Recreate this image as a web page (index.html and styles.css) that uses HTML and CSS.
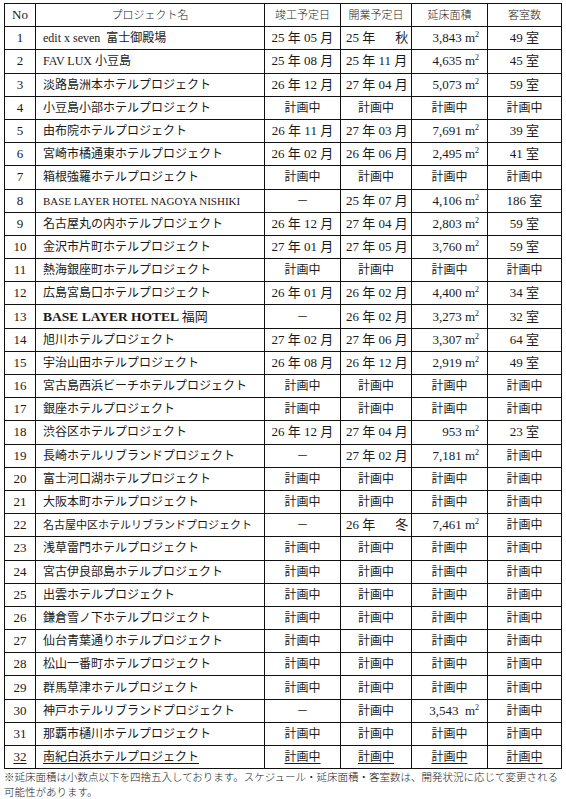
FILE: index.html
```html
<!DOCTYPE html>
<html lang="ja">
<head>
<meta charset="utf-8">
<title>プロジェクト一覧</title>
<link rel="stylesheet" href="styles.css">
</head>
<body>
<div class="page">
<table class="projects">
<colgroup>
<col class="c-no"><col class="c-name"><col class="c-date"><col class="c-open"><col class="c-area"><col class="c-room">
</colgroup>
<thead>
<tr><th>No</th><th class="h-ja">プロジェクト名</th><th class="h-ja">竣工予定日</th><th class="h-ja">開業予定日</th><th class="h-ja">延床面積</th><th class="h-ja">客室数</th></tr>
</thead>
<tbody>
<tr><td class="no">1</td><td class="name">edit x seven&nbsp; 富士御殿場</td><td class="date">25 年 05 月</td><td class="open">25 年<span class="sea">秋</span></td><td class="area">3,843 m<sup>2</sup></td><td class="room">49 室</td></tr>
<tr><td class="no">2</td><td class="name">FAV LUX 小豆島</td><td class="date">25 年 08 月</td><td class="open">25 年 11 月</td><td class="area">4,635 m<sup>2</sup></td><td class="room">45 室</td></tr>
<tr><td class="no">3</td><td class="name">淡路島洲本ホテルプロジェクト</td><td class="date">26 年 12 月</td><td class="open">27 年 04 月</td><td class="area">5,073 m<sup>2</sup></td><td class="room">59 室</td></tr>
<tr><td class="no">4</td><td class="name">小豆島小部ホテルプロジェクト</td><td class="plan">計画中</td><td class="plan">計画中</td><td class="plan">計画中</td><td class="plan">計画中</td></tr>
<tr><td class="no">5</td><td class="name">由布院ホテルプロジェクト</td><td class="date">26 年 11 月</td><td class="open">27 年 03 月</td><td class="area">7,691 m<sup>2</sup></td><td class="room">39 室</td></tr>
<tr><td class="no">6</td><td class="name">宮崎市橘通東ホテルプロジェクト</td><td class="date">26 年 02 月</td><td class="open">26 年 06 月</td><td class="area">2,495 m<sup>2</sup></td><td class="room">41 室</td></tr>
<tr><td class="no">7</td><td class="name">箱根強羅ホテルプロジェクト</td><td class="plan">計画中</td><td class="plan">計画中</td><td class="plan">計画中</td><td class="plan">計画中</td></tr>
<tr><td class="no">8</td><td class="name en-small">BASE LAYER HOTEL NAGOYA NISHIKI</td><td class="dash">－</td><td class="open">25 年 07 月</td><td class="area">4,106 m<sup>2</sup></td><td class="room">186 室</td></tr>
<tr><td class="no">9</td><td class="name">名古屋丸の内ホテルプロジェクト</td><td class="date">26 年 12 月</td><td class="open">27 年 04 月</td><td class="area">2,803 m<sup>2</sup></td><td class="room">59 室</td></tr>
<tr><td class="no">10</td><td class="name">金沢市片町ホテルプロジェクト</td><td class="date">27 年 01 月</td><td class="open">27 年 05 月</td><td class="area">3,760 m<sup>2</sup></td><td class="room">59 室</td></tr>
<tr><td class="no">11</td><td class="name">熱海銀座町ホテルプロジェクト</td><td class="plan">計画中</td><td class="plan">計画中</td><td class="plan">計画中</td><td class="plan">計画中</td></tr>
<tr><td class="no">12</td><td class="name">広島宮島口ホテルプロジェクト</td><td class="date">26 年 01 月</td><td class="open">26 年 02 月</td><td class="area">4,400 m<sup>2</sup></td><td class="room">34 室</td></tr>
<tr><td class="no">13</td><td class="name en-bold">BASE LAYER HOTEL <span class="ja">福岡</span></td><td class="dash">－</td><td class="open">26 年 02 月</td><td class="area">3,273 m<sup>2</sup></td><td class="room">32 室</td></tr>
<tr><td class="no">14</td><td class="name">旭川ホテルプロジェクト</td><td class="date">27 年 02 月</td><td class="open">27 年 06 月</td><td class="area">3,307 m<sup>2</sup></td><td class="room">64 室</td></tr>
<tr><td class="no">15</td><td class="name">宇治山田ホテルプロジェクト</td><td class="date">26 年 08 月</td><td class="open">26 年 12 月</td><td class="area">2,919 m<sup>2</sup></td><td class="room">49 室</td></tr>
<tr><td class="no">16</td><td class="name">宮古島西浜ビーチホテルプロジェクト</td><td class="plan">計画中</td><td class="plan">計画中</td><td class="plan">計画中</td><td class="plan">計画中</td></tr>
<tr><td class="no">17</td><td class="name">銀座ホテルプロジェクト</td><td class="plan">計画中</td><td class="plan">計画中</td><td class="plan">計画中</td><td class="plan">計画中</td></tr>
<tr><td class="no">18</td><td class="name">渋谷区ホテルプロジェクト</td><td class="date">26 年 12 月</td><td class="open">27 年 04 月</td><td class="area">953 m<sup>2</sup></td><td class="room">23 室</td></tr>
<tr><td class="no">19</td><td class="name">長崎ホテルリブランドプロジェクト</td><td class="dash">－</td><td class="open">27 年 02 月</td><td class="area">7,181 m<sup>2</sup></td><td class="plan">計画中</td></tr>
<tr><td class="no">20</td><td class="name">富士河口湖ホテルプロジェクト</td><td class="plan">計画中</td><td class="plan">計画中</td><td class="plan">計画中</td><td class="plan">計画中</td></tr>
<tr><td class="no">21</td><td class="name">大阪本町ホテルプロジェクト</td><td class="plan">計画中</td><td class="plan">計画中</td><td class="plan">計画中</td><td class="plan">計画中</td></tr>
<tr><td class="no">22</td><td class="name small">名古屋中区ホテルリブランドプロジェクト</td><td class="dash">－</td><td class="open">26 年<span class="sea">冬</span></td><td class="area">7,461 m<sup>2</sup></td><td class="plan">計画中</td></tr>
<tr><td class="no">23</td><td class="name">浅草雷門ホテルプロジェクト</td><td class="plan">計画中</td><td class="plan">計画中</td><td class="plan">計画中</td><td class="plan">計画中</td></tr>
<tr><td class="no">24</td><td class="name">宮古伊良部島ホテルプロジェクト</td><td class="plan">計画中</td><td class="plan">計画中</td><td class="plan">計画中</td><td class="plan">計画中</td></tr>
<tr><td class="no">25</td><td class="name">出雲ホテルプロジェクト</td><td class="plan">計画中</td><td class="plan">計画中</td><td class="plan">計画中</td><td class="plan">計画中</td></tr>
<tr><td class="no">26</td><td class="name">鎌倉雪ノ下ホテルプロジェクト</td><td class="plan">計画中</td><td class="plan">計画中</td><td class="plan">計画中</td><td class="plan">計画中</td></tr>
<tr><td class="no">27</td><td class="name">仙台青葉通りホテルプロジェクト</td><td class="plan">計画中</td><td class="plan">計画中</td><td class="plan">計画中</td><td class="plan">計画中</td></tr>
<tr><td class="no">28</td><td class="name">松山一番町ホテルプロジェクト</td><td class="plan">計画中</td><td class="plan">計画中</td><td class="plan">計画中</td><td class="plan">計画中</td></tr>
<tr><td class="no">29</td><td class="name">群馬草津ホテルプロジェクト</td><td class="plan">計画中</td><td class="plan">計画中</td><td class="plan">計画中</td><td class="plan">計画中</td></tr>
<tr><td class="no">30</td><td class="name">神戸ホテルリブランドプロジェクト</td><td class="dash">－</td><td class="plan">計画中</td><td class="area">3,543&nbsp; m<sup>2</sup></td><td class="plan">計画中</td></tr>
<tr><td class="no">31</td><td class="name">那覇市樋川ホテルプロジェクト</td><td class="plan">計画中</td><td class="plan">計画中</td><td class="plan">計画中</td><td class="plan">計画中</td></tr>
<tr class="last"><td class="no"><u>32</u></td><td class="name"><u>南紀白浜ホテルプロジェクト</u></td><td class="plan"><u>計画中</u></td><td class="plan"><u>計画中</u></td><td class="plan"><u>計画中</u></td><td class="plan"><u>計画中</u></td></tr>
</tbody>
</table>
<p class="note">※延床面積は小数点以下を四捨五入しております。スケジュール・延床面積・客室数は、開発状況に応じて変更される可能性があります。</p>
</div>
</body>
</html>
```

FILE: styles.css
```css
html, body {
  margin: 0;
  padding: 0;
  background: #fff;
}
body {
  font-family: "Liberation Serif", "Noto Sans CJK JP", serif;
  color: #1a1a1a;
}
.page {
  padding: 3px 6px 0 4px;
}
.projects {
  border-collapse: collapse;
  table-layout: fixed;
  width: 557px;
}
.c-no { width: 31px; }
.c-name { width: 229px; }
.c-date { width: 76px; }
.c-open { width: 71px; }
.c-area { width: 76px; }
.c-room { width: 74px; }
.projects th,
.projects td {
  border: 1px solid #111;
  padding: 0;
  height: 22.2px;
  line-height: 22px;
  white-space: nowrap;
  overflow: hidden;
  font-weight: normal;
}
.projects th {
  font-size: 13px;
  text-align: center;
}
.projects th.h-ja {
  font-size: 11px;
  font-weight: 300;
}
.projects td {
  font-size: 12px;
}
.no {
  text-align: center;
  font-size: 13px !important;
}
.name {
  text-align: left;
  padding-left: 7px !important;
  font-weight: 300;
}
.name.small { font-size: 11px !important; }
.name.en-small { font-size: 11px !important; font-weight: normal; }
.name.en-bold { font-size: 13.5px !important; font-weight: bold; }
.name.en-bold .ja { font-weight: normal; font-size: 13px; }
.date, .open {
  text-align: center;
  font-size: 13px !important;
}
.open {
  text-align: left;
  padding-left: 5px !important;
}
.sea {
  margin-left: 20px;
}
.area {
  text-align: right;
  padding-right: 8px !important;
  font-size: 13px !important;
}
.area sup {
  font-size: 8px;
  line-height: 0;
  vertical-align: 5px;
}
.room {
  text-align: center;
  font-size: 13px !important;
}
.plan, .dash {
  text-align: center;
  font-weight: 300;
}
.last u {
  text-underline-offset: 2px;
}
.note {
  margin: 1px 0 0;
  font-size: 10.5px;
  line-height: 15px;
  font-weight: 300;
  width: 560px;
}
```
